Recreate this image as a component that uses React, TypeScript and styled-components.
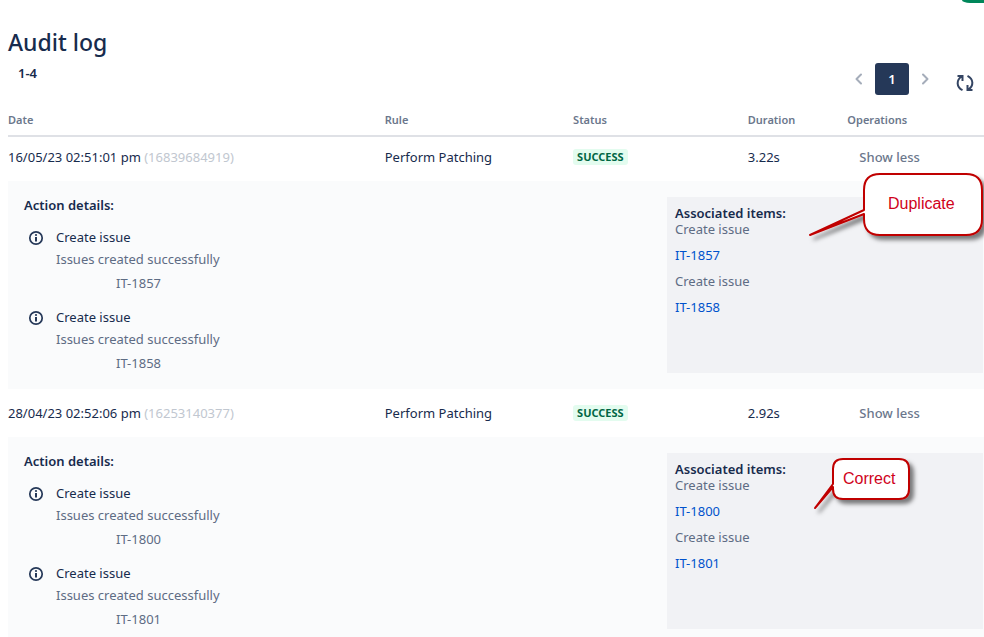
import React from "react";
import styled, { createGlobalStyle } from "styled-components";

const GlobalStyle = createGlobalStyle`
  *, *::before, *::after { box-sizing: border-box; }
  body {
    margin: 0;
    background: #ffffff;
    color: #172b4d;
    font-family: "Noto Sans", "Open Sans", sans-serif;
    font-size: 13px;
    line-height: 20px;
    overflow-x: hidden;
  }
`;

const Page = styled.main`
  padding-left: 8px;
`;

const TopStrip = styled.div`
  display: flex;
  justify-content: flex-end;
  height: 3px;
  overflow: hidden;
`;

const TopAccent = styled.div`
  width: 22px;
  height: 3px;
  background: #00875a;
  border-bottom-left-radius: 8px 3px;
`;

const Title = styled.h1`
  margin: 0;
  padding-top: 23px;
  font-size: 23px;
  font-weight: 500;
  line-height: 32px;
`;

const Toolbar = styled.div`
  display: flex;
  justify-content: space-between;
  align-items: flex-start;
  height: 45px;
  padding: 1px 8px 0 10px;
`;

const Range = styled.strong`
  padding-top: 4px;
  font-weight: 600;
`;

const Pager = styled.nav`
  display: flex;
  align-items: center;
`;

const IconButton = styled.button`
  display: grid;
  place-items: center;
  width: 32px;
  height: 32px;
  padding: 0;
  border: 0;
  background: transparent;
  color: #a5adba;
`;

const PageButton = styled.button`
  width: 34px;
  height: 32px;
  padding: 0;
  border: 0;
  border-radius: 3px;
  background: #253858;
  color: #ffffff;
  font: inherit;
  font-weight: 600;
`;

const RefreshButton = styled(IconButton)`
  width: 22px;
  margin: 8px 0 0 13px;
  color: #344563;
`;

const LogTable = styled.table`
  width: 100%;
  table-layout: fixed;
  border-collapse: separate;
  border-spacing: 0;
`;

const Column = styled.col<{ $share: string }>`
  width: ${(p) => p.$share};
`;

const HeadCell = styled.th`
  height: 34px;
  padding: 8px 0 6px;
  border-bottom: 2px solid #dfe1e6;
  color: #6b778c;
  font-size: 11px;
  font-weight: 600;
  line-height: 16px;
  text-align: left;
`;

const Cell = styled.td<{ $first: boolean }>`
  padding: ${(p) => (p.$first ? "10px" : "14px")} 0 14px;
  line-height: 20px;
  white-space: nowrap;
`;

const LogId = styled.span`
  color: #c1c7d0;
`;

const LozengeSlot = styled.div`
  display: flex;
  align-items: center;
  height: 20px;
`;

const Lozenge = styled.span`
  padding: 0 4px;
  border-radius: 3px;
  background: #e3fcef;
  color: #006644;
  font-size: 11px;
  font-weight: 700;
  line-height: 16px;
`;

const ToggleButton = styled.button`
  margin-left: 12px;
  padding: 0;
  border: 0;
  background: transparent;
  color: #6b778c;
  font: inherit;
  font-weight: 500;
`;

const DetailCell = styled.td`
  padding: 16px 1px 16px 16px;
  background: #fafbfc;
`;

const DetailGrid = styled.div`
  display: grid;
  grid-template-columns: 643fr 316fr;
`;

const PanelTitle = styled.h2`
  margin: 0;
  font-size: 13px;
  font-weight: 600;
  line-height: 16px;
`;

const ActionList = styled.ul`
  margin: 0;
  padding: 0;
  list-style: none;
`;

const Action = styled.li`
  display: grid;
  grid-template-columns: 32px 1fr;
  padding-top: 14px;
  color: #5e6c84;
`;

const InfoSlot = styled.span`
  display: flex;
  align-items: center;
  height: 22px;
  padding-left: 4px;
  color: #253858;
`;

const ActionName = styled.div`
  color: #172b4d;
`;

const ActionMessage = styled.div`
  margin-top: 2px;
`;

const ActionIssue = styled.div`
  margin-top: 4px;
  padding-left: 60px;
`;

const Associated = styled.section`
  position: relative;
  padding: 8px;
  background: #f1f2f5;
`;

const Item = styled.div`
  margin-bottom: 10px;
  color: #5e6c84;
  line-height: 16px;
`;

const IssueLink = styled.a`
  color: #0052cc;
  text-decoration: none;
`;

const CalloutBox = styled.div<{ $left: number; $top: number }>`
  position: absolute;
  left: ${(p) => p.$left}px;
  top: ${(p) => p.$top}px;
`;

const CalloutShape = styled.svg`
  display: block;
`;

const CalloutText = styled.span<{ $left: number; $top: number }>`
  position: absolute;
  left: ${(p) => p.$left}px;
  top: ${(p) => p.$top}px;
  color: #d0021b;
  font-family: "Liberation Sans", Arial, sans-serif;
  font-size: 16px;
`;

type Note = {
  label: string;
  left: number;
  top: number;
  width: number;
  height: number;
  path: string;
  textLeft: number;
  textTop: number;
};

type Entry = {
  date: string;
  id: string;
  duration: string;
  issues: string[];
  note: Note;
};

const entries: Entry[] = [
  {
    date: "16/05/23 02:51:01 pm",
    id: "16839684919",
    duration: "3.22s",
    issues: ["IT-1857", "IT-1858"],
    note: {
      label: "Duplicate",
      left: 138,
      top: -29,
      width: 179,
      height: 82,
      path: "M75 6H161Q177 6 177 22V51Q177 67 161 67H75Q59 67 59 51V46L5 67L59 42V22Q59 6 75 6Z",
      textLeft: 83,
      textTop: 26,
    },
  },
  {
    date: "28/04/23 02:52:06 pm",
    id: "16253140377",
    duration: "2.92s",
    issues: ["IT-1800", "IT-1801"],
    note: {
      label: "Correct",
      left: 142,
      top: 0,
      width: 112,
      height: 66,
      path: "M34 6H90Q100 6 100 16V36Q100 46 90 46H34Q24 46 24 36V34L6 55L24 31V16Q24 6 34 6Z",
      textLeft: 34,
      textTop: 16,
    },
  },
];

function Chevron({ next = false }: { next?: boolean }) {
  return (
    <svg width="10" height="12" viewBox="0 0 10 12" fill="none" stroke="currentColor" strokeWidth="2" strokeLinecap="round" strokeLinejoin="round">
      <path d={next ? "M3 1.5L7.5 6L3 10.5" : "M7 1.5L2.5 6L7 10.5"} />
    </svg>
  );
}

function RefreshIcon() {
  return (
    <svg width="18" height="18" viewBox="0 0 18 18" fill="none" stroke="currentColor" strokeWidth="2">
      <path d="M6.5 16.2C.2 13 .2 6 5.600 2.500M1.500 2H6.500V7" />
      <path d="M11.500 1.800C17.800 5 17.800 12 12.400 15.500M16.500 16H11.500V11" />
    </svg>
  );
}

function InfoIcon() {
  return (
    <svg width="16" height="16" viewBox="0 0 16 16" fill="none">
      <circle cx="8" cy="8" r="6.2" stroke="currentColor" strokeWidth="1.700" />
      <path d="M7 7H9V11.500H7Z" fill="currentColor" />
      <circle cx="8" cy="5" r="1.100" fill="currentColor" />
    </svg>
  );
}

function Callout({ note }: { note: Note }) {
  return (
    <CalloutBox $left={note.left} $top={note.top}>
      <CalloutShape width={note.width} height={note.height} aria-hidden="true">
        <defs>
          <filter id={`shadow-${note.label}`} x="-10%" y="-10%" width="130%" height="140%">
            <feDropShadow dx="4" dy="4" stdDeviation="2" floodColor="#000000" floodOpacity="0.5" />
          </filter>
        </defs>
        <path
          d={note.path}
          fill="#ffffff"
          stroke="#c00000"
          strokeWidth="2"
          strokeLinejoin="round"
          filter={`url(#shadow-${note.label})`}
        />
      </CalloutShape>
      <CalloutText $left={note.textLeft} $top={note.textTop}>{note.label}</CalloutText>
    </CalloutBox>
  );
}

function LogEntry({ entry, first }: { entry: Entry; first: boolean }) {
  return (
    <>
      <tr>
        <Cell $first={first}>
          {entry.date} <LogId>({entry.id})</LogId>
        </Cell>
        <Cell $first={first}>Perform Patching</Cell>
        <Cell $first={first}>
          <LozengeSlot><Lozenge>SUCCESS</Lozenge></LozengeSlot>
        </Cell>
        <Cell $first={first}>{entry.duration}</Cell>
        <Cell $first={first}><ToggleButton type="button">Show less</ToggleButton></Cell>
      </tr>
      <tr>
        <DetailCell colSpan={5}>
          <DetailGrid>
            <section>
              <PanelTitle>Action details:</PanelTitle>
              <ActionList>
                {entry.issues.map((issue) => (
                  <Action key={issue}>
                    <InfoSlot><InfoIcon /></InfoSlot>
                    <div>
                      <ActionName>Create issue</ActionName>
                      <ActionMessage>Issues created successfully</ActionMessage>
                      <ActionIssue>{issue}</ActionIssue>
                    </div>
                  </Action>
                ))}
              </ActionList>
            </section>
            <Associated>
              <PanelTitle>Associated items:</PanelTitle>
              {entry.issues.map((issue) => (
                <React.Fragment key={issue}>
                  <Item>Create issue</Item>
                  <Item><IssueLink href={`#${issue}`}>{issue}</IssueLink></Item>
                </React.Fragment>
              ))}
              <Callout note={entry.note} />
            </Associated>
          </DetailGrid>
        </DetailCell>
      </tr>
    </>
  );
}

export default function App() {
  return (
    <>
      <GlobalStyle />
      <TopStrip><TopAccent /></TopStrip>
      <Page>
        <Title>Audit log</Title>
        <Toolbar>
          <Range>1-4</Range>
          <Pager aria-label="Pagination">
            <IconButton type="button" aria-label="Previous page"><Chevron /></IconButton>
            <PageButton type="button" aria-current="page">1</PageButton>
            <IconButton type="button" aria-label="Next page"><Chevron next /></IconButton>
            <RefreshButton type="button" aria-label="Refresh"><RefreshIcon /></RefreshButton>
          </Pager>
        </Toolbar>
        <LogTable>
          <colgroup>
            <Column $share="38.6%" />
            <Column $share="19.3%" />
            <Column $share="17.9%" />
            <Column $share="10.2%" />
            <Column $share="14%" />
          </colgroup>
          <thead>
            <tr>
              <HeadCell scope="col">Date</HeadCell>
              <HeadCell scope="col">Rule</HeadCell>
              <HeadCell scope="col">Status</HeadCell>
              <HeadCell scope="col">Duration</HeadCell>
              <HeadCell scope="col">Operations</HeadCell>
            </tr>
          </thead>
          <tbody>
            {entries.map((entry, index) => (
              <LogEntry key={entry.id} entry={entry} first={index === 0} />
            ))}
          </tbody>
        </LogTable>
      </Page>
    </>
  );
}
